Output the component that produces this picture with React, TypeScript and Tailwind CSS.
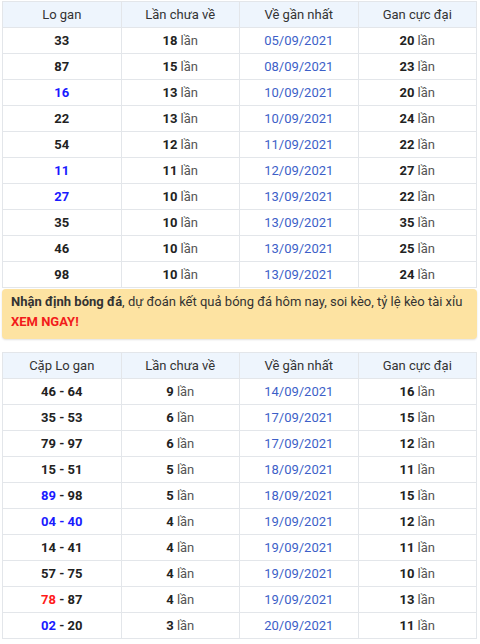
import React from "react";

type Part = { t: string; c?: "blue" | "red" };

const LO_GAN: { num: Part[]; lan: number; date: string; max: number }[] = [
  { num: [{ t: "33" }], lan: 18, date: "05/09/2021", max: 20 },
  { num: [{ t: "87" }], lan: 15, date: "08/09/2021", max: 23 },
  { num: [{ t: "16", c: "blue" }], lan: 13, date: "10/09/2021", max: 20 },
  { num: [{ t: "22" }], lan: 13, date: "10/09/2021", max: 24 },
  { num: [{ t: "54" }], lan: 12, date: "11/09/2021", max: 22 },
  { num: [{ t: "11", c: "blue" }], lan: 11, date: "12/09/2021", max: 27 },
  { num: [{ t: "27", c: "blue" }], lan: 10, date: "13/09/2021", max: 22 },
  { num: [{ t: "35" }], lan: 10, date: "13/09/2021", max: 35 },
  { num: [{ t: "46" }], lan: 10, date: "13/09/2021", max: 25 },
  { num: [{ t: "98" }], lan: 10, date: "13/09/2021", max: 24 },
];

const CAP_LO: { num: Part[]; lan: number; date: string; max: number }[] = [
  { num: [{ t: "46 - 64" }], lan: 9, date: "14/09/2021", max: 16 },
  { num: [{ t: "35 - 53" }], lan: 6, date: "17/09/2021", max: 15 },
  { num: [{ t: "79 - 97" }], lan: 6, date: "17/09/2021", max: 12 },
  { num: [{ t: "15 - 51" }], lan: 5, date: "18/09/2021", max: 11 },
  { num: [{ t: "89", c: "blue" }, { t: " - 98" }], lan: 5, date: "18/09/2021", max: 15 },
  { num: [{ t: "04 - 40", c: "blue" }], lan: 4, date: "19/09/2021", max: 12 },
  { num: [{ t: "14 - 41" }], lan: 4, date: "19/09/2021", max: 11 },
  { num: [{ t: "57 - 75" }], lan: 4, date: "19/09/2021", max: 10 },
  { num: [{ t: "78", c: "red" }, { t: " - 87" }], lan: 4, date: "19/09/2021", max: 13 },
  { num: [{ t: "02", c: "blue" }, { t: " - 20" }], lan: 3, date: "20/09/2021", max: 11 },
];

const cell = "border border-[#e3e6ea] h-[26px] text-center align-middle";

function Lan({ n }: { n: number }) {
  return (
    <>
      <b className="font-bold text-[#222]">{n}</b>{" "}
      <span className="text-[#555]">lần</span>
    </>
  );
}

function GanTable({
  first,
  rows,
}: {
  first: string;
  rows: typeof LO_GAN;
}) {
  return (
    <table className="w-full table-fixed border-collapse text-[13px]">
      <thead>
        <tr className="bg-[#eef5fd] text-[#333]">
          <th className={`${cell} font-normal`}>{first}</th>
          <th className={`${cell} font-normal`}>Lần chưa về</th>
          <th className={`${cell} font-normal`}>Về gần nhất</th>
          <th className={`${cell} font-normal`}>Gan cực đại</th>
        </tr>
      </thead>
      <tbody>
        {rows.map((r, i) => (
          <tr key={i} className="bg-white">
            <td className={`${cell} font-bold text-[#222]`}>
              {r.num.map((p, j) => (
                <span
                  key={j}
                  className={
                    p.c === "blue"
                      ? "text-[#1a1aff]"
                      : p.c === "red"
                        ? "text-[#ff1a1a]"
                        : ""
                  }
                >
                  {p.t}
                </span>
              ))}
            </td>
            <td className={cell}>
              <Lan n={r.lan} />
            </td>
            <td className={`${cell} text-[#3d5fc8]`}>{r.date}</td>
            <td className={cell}>
              <Lan n={r.max} />
            </td>
          </tr>
        ))}
      </tbody>
    </table>
  );
}

export default function App() {
  return (
    <div
      className="w-[480px] h-[644px] bg-white px-[2px] pt-[1px] overflow-hidden"
      style={{ fontFamily: "Roboto, 'Liberation Sans', sans-serif" }}
    >
      <div className="w-[475px]">
        <GanTable first="Lo gan" rows={LO_GAN} />
        <div className="mt-[1px] h-[50px] rounded-[4px] bg-[#fde3a2] pl-[9px] pr-[4px] pt-[3px] text-[13px] leading-[20px] text-[#333] shadow-[0_1px_2px_rgba(0,0,0,0.12)]">
          <b className="font-bold">Nhận định bóng đá</b>, dự đoán kết quả bóng
          đá hôm nay, soi kèo, tỷ lệ kèo tài xỉu{" "}
          <b className="font-bold text-[#f21b1b]">XEM NGAY!</b>
        </div>
        <div className="mt-[13px]">
          <GanTable first="Cặp Lo gan" rows={CAP_LO} />
        </div>
      </div>
    </div>
  );
}
